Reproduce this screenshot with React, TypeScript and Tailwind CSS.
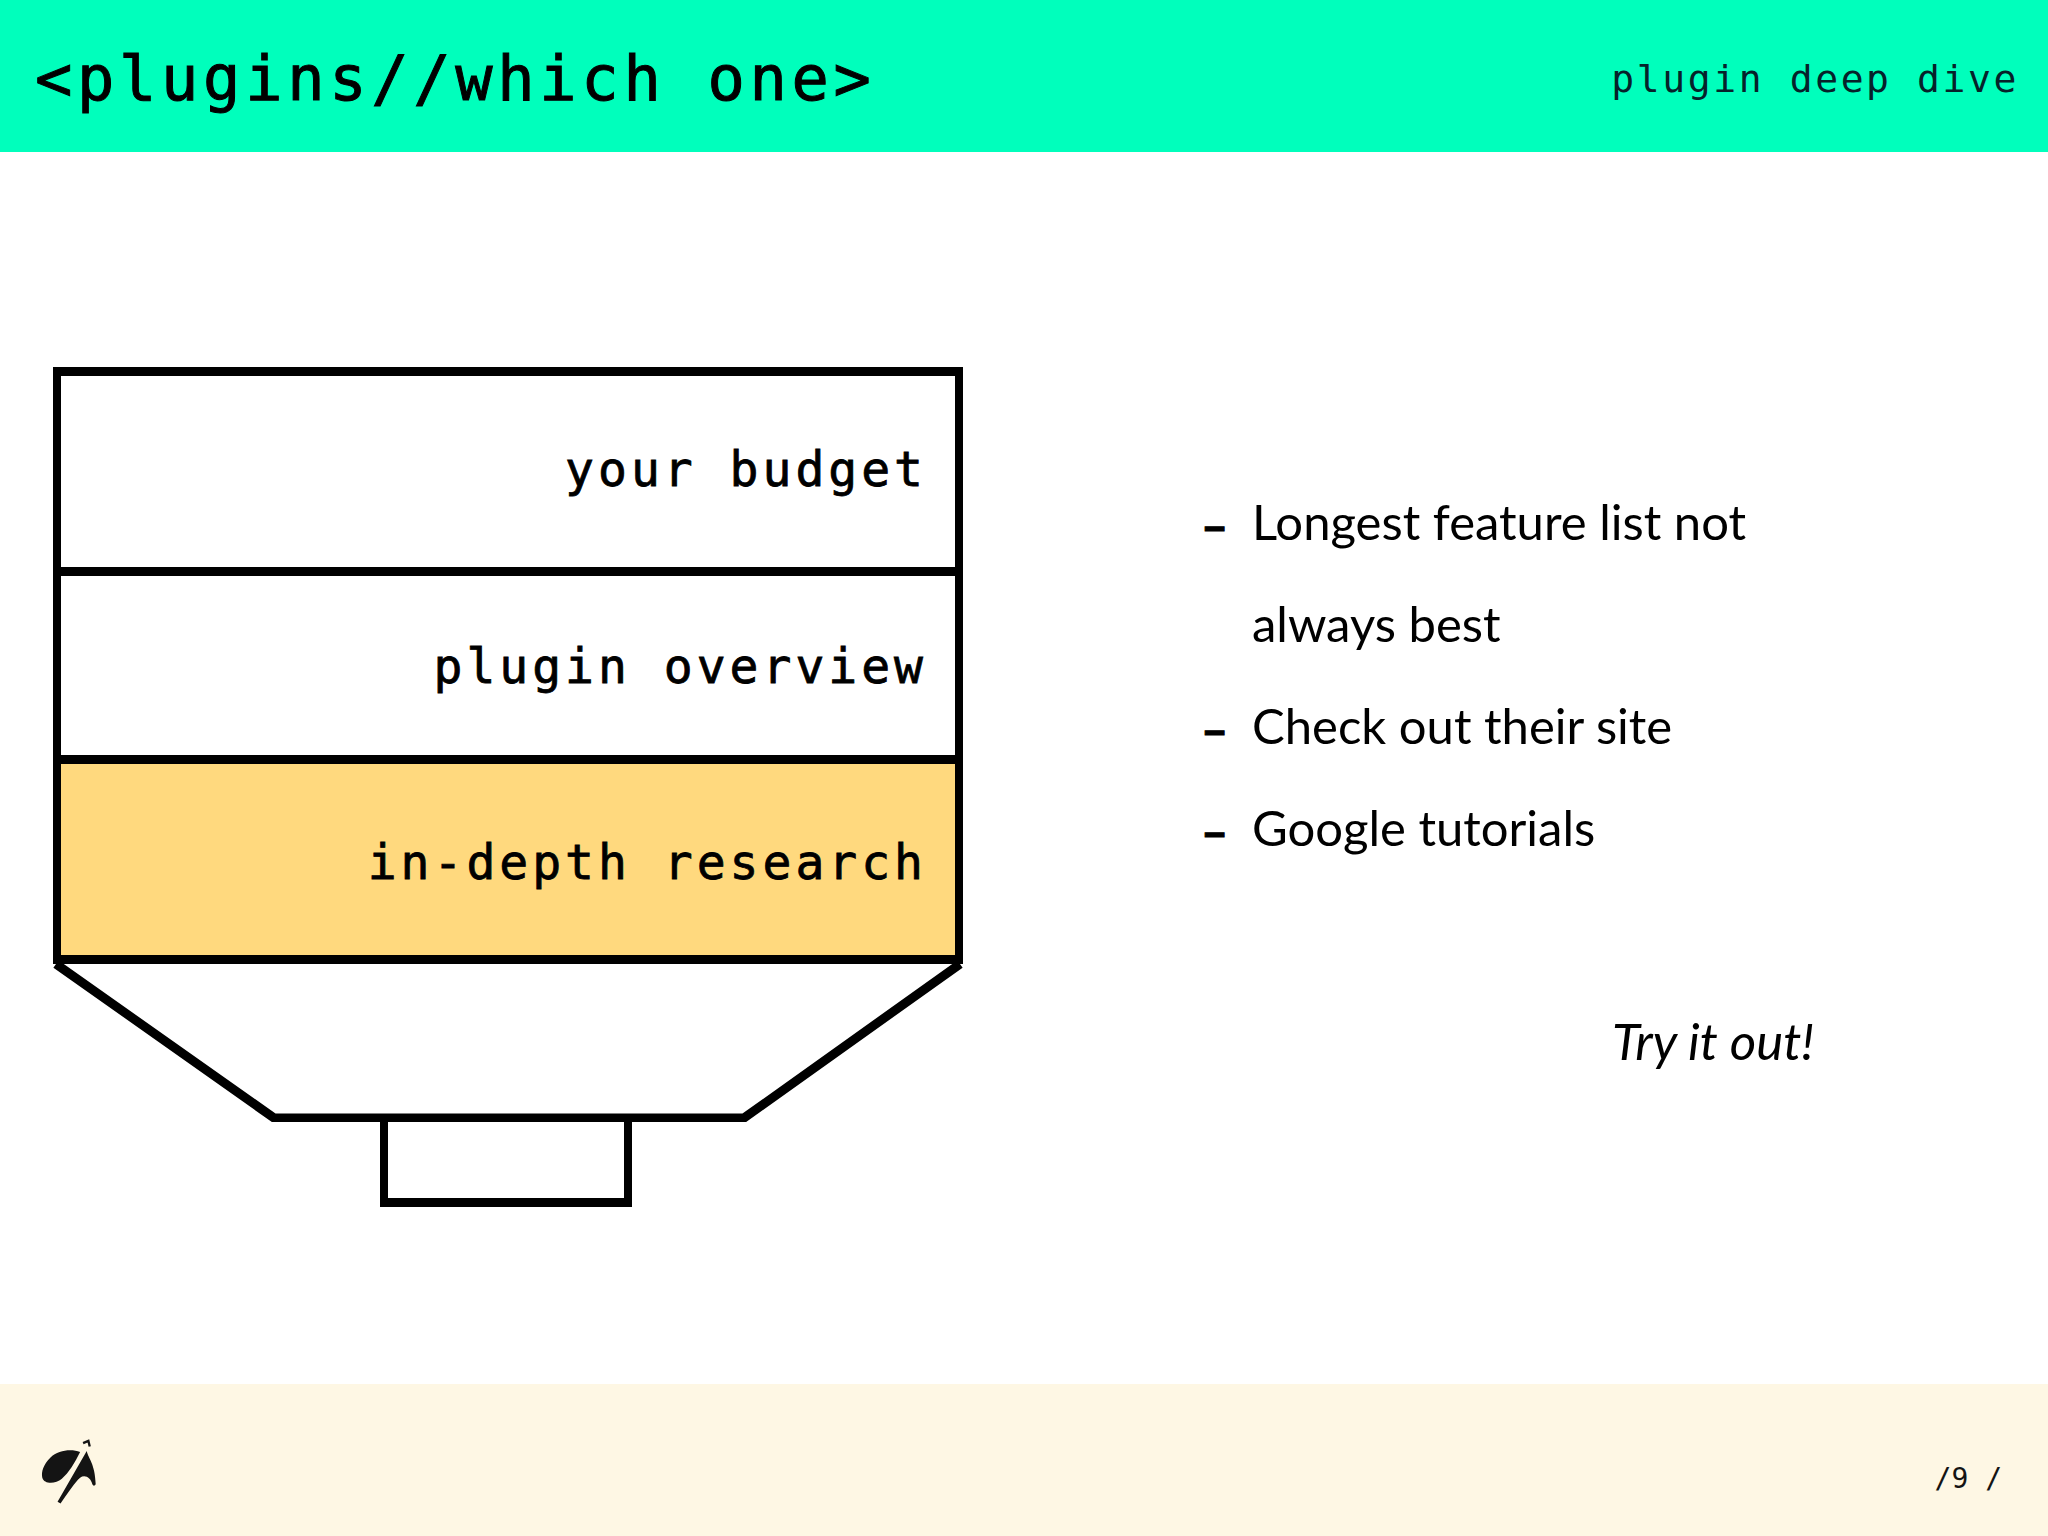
const mono = "font-['DejaVu_Sans_Mono',monospace]";

function Logo() {
  return (
    <svg viewBox="110 230 190 210" className="h-[70px] w-[63px]">
      <path
        d="M240 275C215 265 175 268 150 292C130 312 122 335 126 352C132 372 165 372 185 355C205 340 225 305 240 275Z"
        fill="#141414"
      />
      <path
        d="M260 272C265 295 285 310 287 372C284 378 279 377 277 372C272 352 255 342 240 352C225 365 205 395 181 430L172 425Z"
        fill="#141414"
      />
      <path d="M249 248L265 241L269 258" fill="none" stroke="#141414" strokeWidth="7" />
    </svg>
  );
}

function Row({ label, className }: { label: string; className: string }) {
  return (
    <div className={`flex items-center justify-end pr-[28px] ${className}`}>
      <span className={`${mono} text-[48px] leading-none tracking-[4px] text-black [-webkit-text-stroke:0.8px_black]`}>
        {label}
      </span>
    </div>
  );
}

function Bullet({ text, dash = true }: { text: string; dash?: boolean }) {
  return (
    <div className="flex h-[102px] items-center">
      <span className="w-[51px] pt-[6px] text-[47px] font-bold [-webkit-text-stroke:1px_black]">{dash ? '–' : ''}</span>
      <span>{text}</span>
    </div>
  );
}

export default function App() {
  return (
    <div className="flex h-[1536px] w-[2048px] flex-col overflow-hidden bg-white text-black">
      {/* Header */}
      <header className="flex h-[152px] shrink-0 items-center justify-between bg-[#00ffbc] pl-[35px] pr-[29px] pt-[6px]">
        <h1 className={`${mono} text-[62px] font-normal leading-none tracking-[4.7px] [-webkit-text-stroke:1px_black]`}>
          {'<plugins//which one>'}
        </h1>
        <span className={`${mono} text-[38px] leading-none tracking-[2.6px] text-[#06222a]`}>
          plugin deep dive
        </span>
      </header>

      {/* Slide body */}
      <main className="flex flex-1 items-start pl-[53px] pt-[215px]">
        <div className="w-[910px] shrink-0">
          <div className="border-x-8 border-y-[9px] border-black">
            <Row label="your budget" className="h-[200px] border-b-[9px] border-black pb-[5px]" />
            <Row label="plugin overview" className="h-[188px] border-b-[9px] border-black" />
            <Row label="in-depth research" className="h-[191px] bg-[#ffd97e] pt-[5px]" />
          </div>
          <svg viewBox="0 0 910 158" className="block h-[158px] w-[910px]">
            <polyline
              points="3,0 221,154 691,154 907,0"
              fill="none"
              stroke="black"
              strokeWidth="9"
              strokeLinejoin="miter"
            />
          </svg>
          <div className="ml-[327px] h-[85px] w-[252px] border-x-8 border-b-[9px] border-black" />
        </div>

        <div className="ml-[238px] mt-[104px] font-['Lato',sans-serif] text-[49px]">
          <Bullet text="Longest feature list not" />
          <Bullet text="always best" dash={false} />
          <Bullet text="Check out their site" />
          <Bullet text="Google tutorials" />
          <p className="ml-[411px] mt-[111px] text-[51px] italic leading-[102px]">Try it out!</p>
        </div>
      </main>

      {/* Footer */}
      <footer className="flex h-[152px] shrink-0 items-start justify-between bg-[#fef7e4] pl-[37px] pr-[46px] pt-[53px]">
        <Logo />
        <span className={`${mono} mt-[28px] text-[28px] leading-none text-[#141414]`}>/9 /</span>
      </footer>
    </div>
  );
}
